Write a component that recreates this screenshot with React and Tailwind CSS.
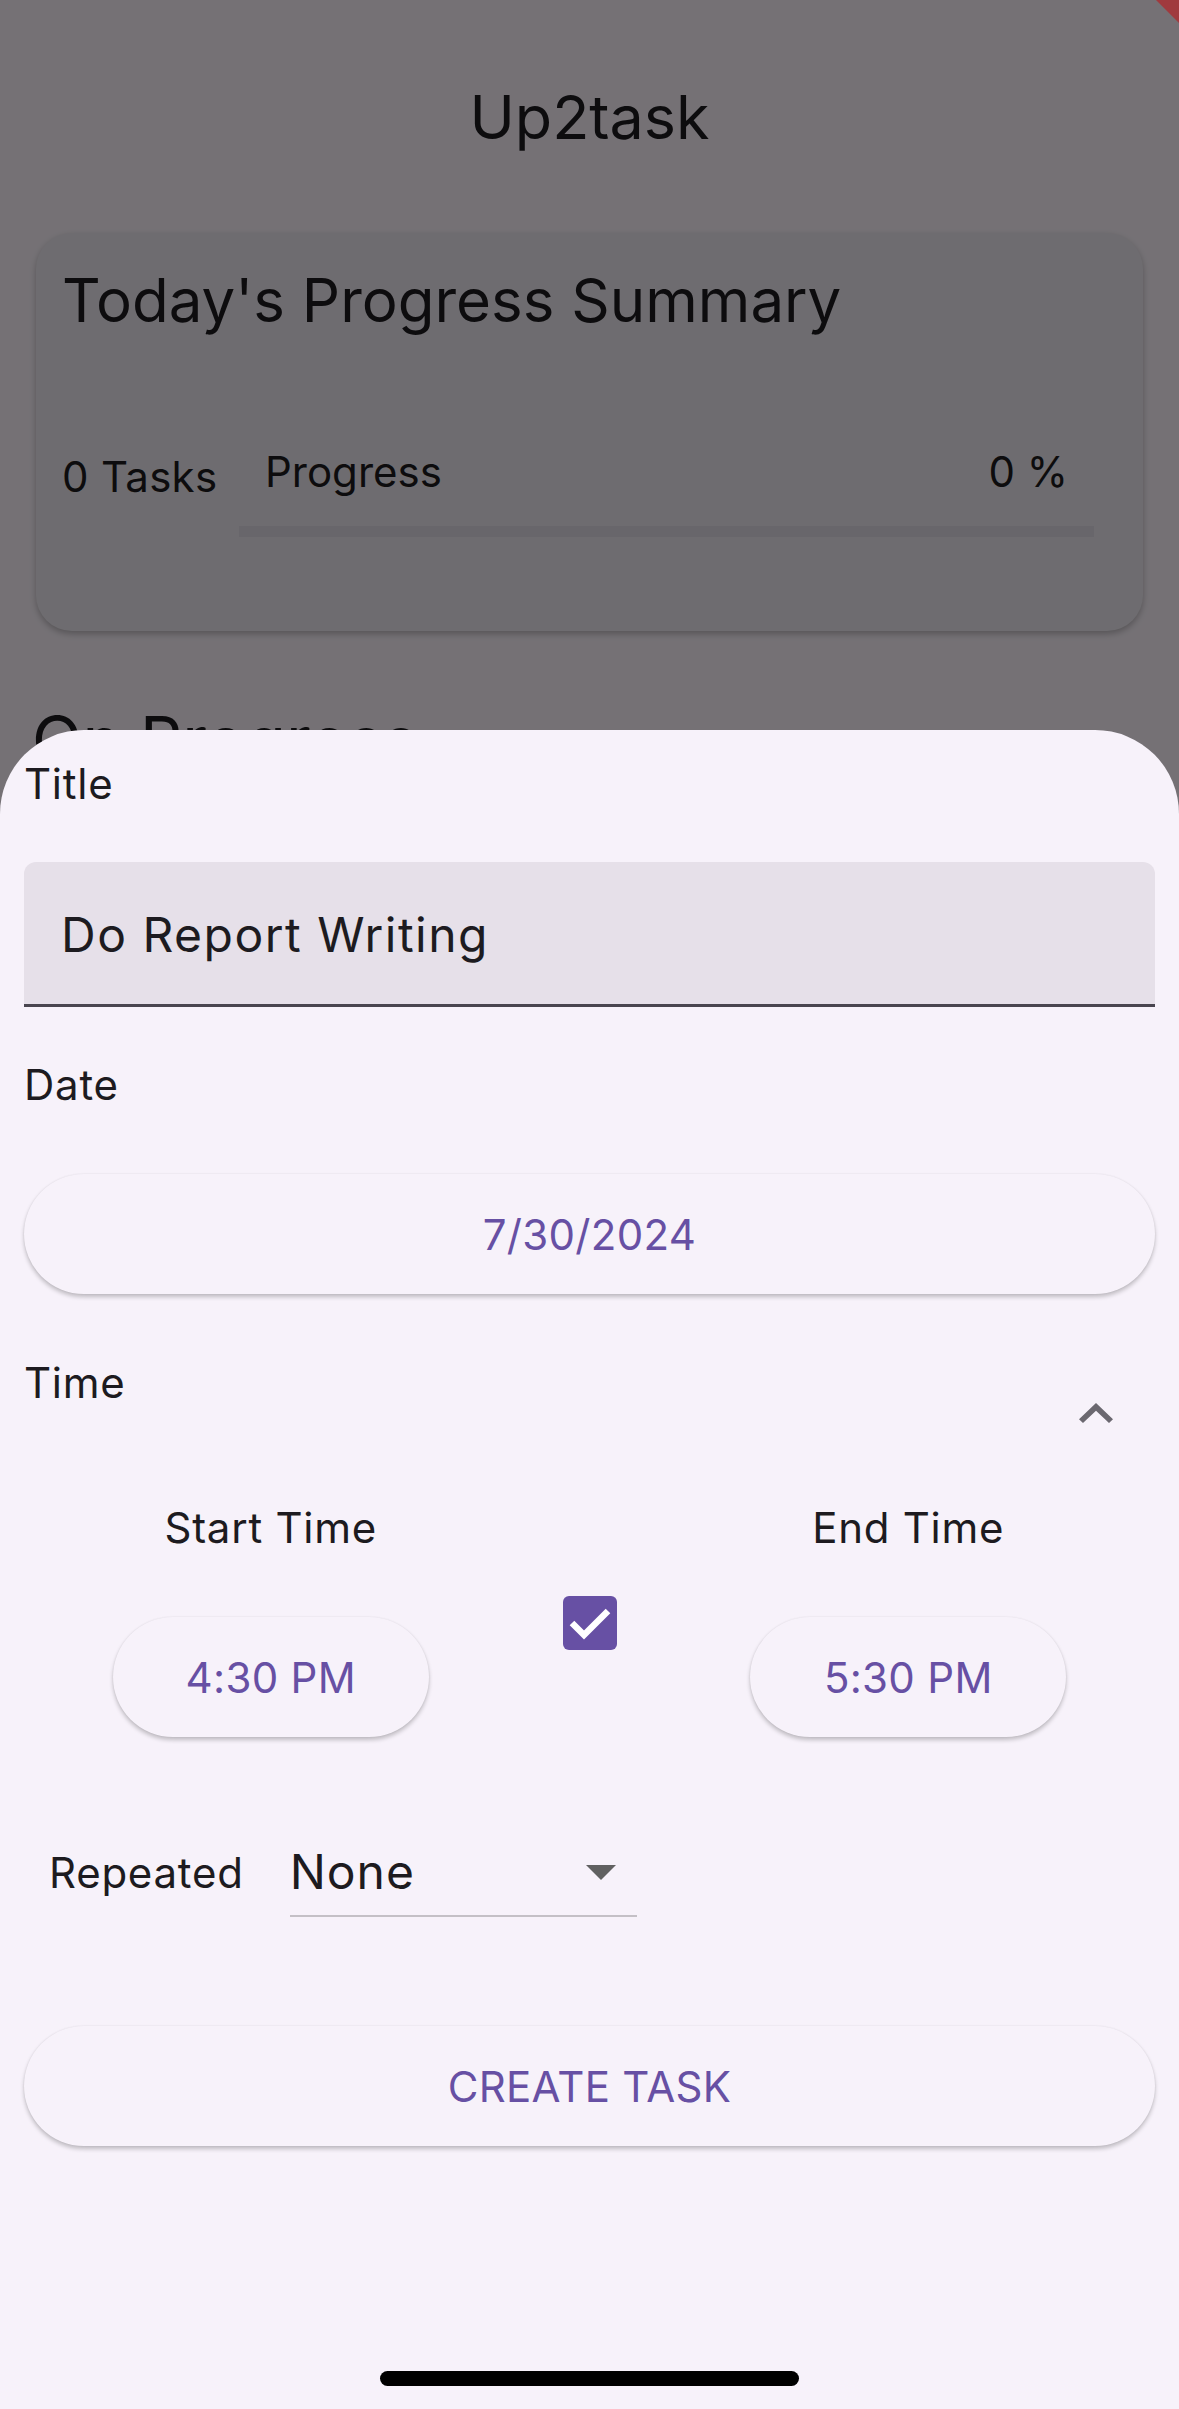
import React from 'react';

const Label = ({ children }) => (
    <div className="text-[42px] leading-[50px] tracking-[0.75px] text-[#1d1b20]">{children}</div>
);

const PillButton = ({ children, className = '' }) => (
    <button
        className={`flex h-[120px] items-center justify-center rounded-full bg-[#f7f2fa] text-[42px] tracking-[0.3px] text-[#6750a4] shadow-[0_3px_4px_rgba(0,0,0,0.22),0_0_2px_rgba(0,0,0,0.08)] ${className}`}
    >
        {children}
    </button>
);

const TimeColumn = ({ label, value }) => (
    <div className="flex w-[316px] flex-col items-center">
        <Label>{label}</Label>
        <PillButton className="mt-[64px] w-[316px]">{value}</PillButton>
    </div>
);

const App = () => {
    return (
        <div className="relative h-[2409px] w-[1179px] overflow-hidden bg-[#fef7ff] font-['Inter',sans-serif]">
            {/* page underneath the sheet */}
            <div className="flex flex-col">
                <div className="pt-[77px] text-center text-[61px] leading-[80px] text-[#1d1b20]">Up2task</div>

                <div className="mx-[36px] mt-[76px] h-[398px] rounded-[36px] bg-[#f0ecf3] pl-[26px] pr-[49px] pt-[31px] shadow-[0_3px_6px_rgba(0,0,0,0.25)]">
                    <div className="text-[60px] leading-[72px] text-[#1d1b20]">Today's Progress Summary</div>
                    <div className="mt-[111px] flex items-start">
                        <div className="mt-[3px] w-[177px] text-[42px] leading-[54px] tracking-[0.3px] text-[#1d1b20]">0 Tasks</div>
                        <div className="flex flex-1 flex-col">
                            <div className="flex justify-between px-[26px] text-[42px] leading-[50px] text-[#1d1b20]">
                                <span>Progress</span>
                                <span>0 %</span>
                            </div>
                            <div className="mt-[29px] h-[11px] bg-[#e3dee9]" />
                        </div>
                    </div>
                </div>

                <div className="ml-[32px] mt-[69px] text-[66px] leading-[80px] text-[#1d1b20]">On Progress</div>
            </div>

            {/* scrim */}
            <div className="absolute inset-0 bg-black/[0.54]" />

            {/* debug ribbon corner */}
            <div className="absolute right-0 top-0 h-[23px] w-[23px] bg-[#a03a3e] [clip-path:polygon(0_0,100%_0,100%_100%)]" />

            {/* bottom sheet */}
            <div className="absolute bottom-0 left-0 right-0 top-[730px] flex flex-col rounded-t-[84px] bg-[#f7f2fa] px-[24px] pt-[29px]">
                <Label>Title</Label>
                <div className="mt-[53px] flex h-[145px] items-center rounded-t-[12px] border-b-[3px] border-[#49454f] bg-[#e6e0e9] pl-[37px] pt-[4px] text-[48px] tracking-[1.5px] text-[#1d1b20]">
                    Do Report Writing
                </div>

                <div className="mt-[53px]">
                    <Label>Date</Label>
                </div>
                <PillButton className="mt-[64px] w-full">7/30/2024</PillButton>

                <div className="mt-[64px] flex items-start justify-between">
                    <Label>Time</Label>
                    <svg className="mr-[42px] mt-[45px]" width="34" height="20" viewBox="6 8 12 7.41" preserveAspectRatio="none">
                        <path d="M12 8l-6 6 1.41 1.41L12 10.83l4.59 4.58L18 14z" fill="#6b6870" />
                    </svg>
                </div>

                <div className="mt-[80px] flex items-center justify-evenly">
                    <TimeColumn label="Start Time" value="4:30 PM" />
                    <div className="mt-[6px] flex w-[144px] justify-center">
                        <div className="h-[54px] w-[54px] rounded-[6px] bg-[#6750a4]">
                            <svg width="54" height="54" viewBox="0 0 54 54">
                                <polyline points="9,27 21,39 45,15" fill="none" stroke="#fff" strokeWidth="6.5" />
                            </svg>
                        </div>
                    </div>
                    <TimeColumn label="End Time" value="5:30 PM" />
                </div>

                <div className="mt-[92px] flex items-center gap-[46px] pl-[25px]">
                    <Label>Repeated</Label>
                    <div className="flex w-[347px] flex-col">
                        <div className="flex h-[86px] items-center justify-between">
                            <span className="text-[48px] tracking-[1px] text-[#1d1b20]">None</span>
                            <div className="flex w-[72px] justify-center">
                                <svg width="30" height="15" viewBox="7 10 10 5" preserveAspectRatio="none">
                                    <path d="M7 10l5 5 5-5z" fill="#616161" />
                                </svg>
                            </div>
                        </div>
                        <div className="h-[2px] bg-[#c4c0c6]" />
                    </div>
                </div>

                <PillButton className="mt-[109px] w-full">CREATE TASK</PillButton>

                <div className="mx-auto mt-[225px] h-[15px] w-[419px] rounded-full bg-black" />
            </div>
        </div>
    );
};

export default App;
